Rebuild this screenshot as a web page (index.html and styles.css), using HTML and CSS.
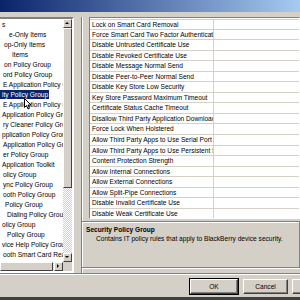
FILE: index.html
```html
<!DOCTYPE html>
<html lang="en">
<head>
  <meta charset="utf-8">
  <title>IT Policy</title>
  <link rel="stylesheet" href="styles.css">
</head>
<body>
<div class="window">
  <div class="titlebar"></div>
  <div class="main">
    <div class="tree">
      <div class="tree-list">
        <div class="node i0">s</div>
        <div class="node i7">e-Only Items</div>
        <div class="node i2">op-Only Items</div>
        <div class="node i10">Items</div>
        <div class="node i2">on Policy Group</div>
        <div class="node i1">ord Policy Group</div>
        <div class="node i1">E Application Policy Group</div>
        <div class="node i0"><span class="selected">ity Policy Group</span></div>
        <div class="node i1">E Application Policy Group</div>
        <div class="node i0">Application Policy Group</div>
        <div class="node i1">ry Cleaner Policy Group</div>
        <div class="node i0">pplication Policy Group</div>
        <div class="node i1">Application Policy Group</div>
        <div class="node i1">er Policy Group</div>
        <div class="node i0">Application Toolkit</div>
        <div class="node i1">olicy Group</div>
        <div class="node i1">ync Policy Group</div>
        <div class="node i1">ooth Policy Group</div>
        <div class="node i3">Policy Group</div>
        <div class="node i5">Dialing Policy Group</div>
        <div class="node i0">olicy Group</div>
        <div class="node i5">Policy Group</div>
        <div class="node i0">vice Help Policy Group</div>
        <div class="node i1">ooth Smart Card Reader Policy Group</div>
        <div class="node i1">olicy Group</div>
      </div>
      <div class="vscroll">
        <div class="btn arrow-up"></div>
        <div class="thumb"></div>
        <div class="track"></div>
        <div class="btn arrow-down"></div>
      </div>
      <div class="hscroll">
        <div class="hthumb"></div>
        <div class="btn arrow-right"></div>
      </div>
      <div class="corner"></div>
    </div>

    <div class="detail">
      <div class="rules">
        <div class="rule"><span class="name">Lock on Smart Card Removal</span><span class="value"></span></div>
        <div class="rule"><span class="name">Force Smart Card Two Factor Authentication</span><span class="value"></span></div>
        <div class="rule"><span class="name">Disable Untrusted Certificate Use</span><span class="value"></span></div>
        <div class="rule"><span class="name">Disable Revoked Certificate Use</span><span class="value"></span></div>
        <div class="rule"><span class="name">Disable Message Normal Send</span><span class="value"></span></div>
        <div class="rule"><span class="name">Disable Peer-to-Peer Normal Send</span><span class="value"></span></div>
        <div class="rule"><span class="name">Disable Key Store Low Security</span><span class="value"></span></div>
        <div class="rule"><span class="name">Key Store Password Maximum Timeout</span><span class="value"></span></div>
        <div class="rule"><span class="name">Certificate Status Cache Timeout</span><span class="value"></span></div>
        <div class="rule"><span class="name">Disallow Third Party Application Downloads</span><span class="value"></span></div>
        <div class="rule"><span class="name">Force Lock When Holstered</span><span class="value"></span></div>
        <div class="rule"><span class="name">Allow Third Party Apps to Use Serial Port</span><span class="value"></span></div>
        <div class="rule"><span class="name">Allow Third Party Apps to Use Persistent Store</span><span class="value"></span></div>
        <div class="rule"><span class="name">Content Protection Strength</span><span class="value"></span></div>
        <div class="rule"><span class="name">Allow Internal Connections</span><span class="value"></span></div>
        <div class="rule"><span class="name">Allow External Connections</span><span class="value"></span></div>
        <div class="rule"><span class="name">Allow Split-Pipe Connections</span><span class="value"></span></div>
        <div class="rule"><span class="name">Disable Invalid Certificate Use</span><span class="value"></span></div>
        <div class="rule"><span class="name">Disable Weak Certificate Use</span><span class="value"></span></div>
      </div>
      <div class="description">
        <div class="desc-title">Security Policy Group</div>
        <div class="desc-text">Contains IT policy rules that apply to BlackBerry device security.</div>
      </div>
    </div>
  </div>
  <div class="footer">
    <button class="button default" type="button">OK</button>
    <button class="button" type="button">Cancel</button>
    <button class="button" type="button">Apply</button>
  </div>
</div>
<svg class="cursor" width="8" height="12" viewBox="0 0 8 12"><path d="M0.5 0.5 L0.5 9.5 L2.5 7.5 L4 11 L5.5 10.3 L4 7 L7 7 Z" fill="#fff" stroke="#000" stroke-width="1"/></svg>
</body>
</html>
```

FILE: styles.css
```css
body {
  margin: 0;
  width: 300px;
  height: 300px;
  overflow: hidden;
  background: #d4d0c8;
  font-family: "Liberation Sans", Arial, sans-serif;
  font-size: 6.6px;
  color: #000;
  position: relative;
}

.window {
  display: flex;
  flex-direction: column;
  height: 297px;
  border-bottom: 3px solid #404040;
}

.titlebar {
  height: 12px;
  background: linear-gradient(to right, #0a246a, #a6caf0);
}

.main {
  display: flex;
  padding-top: 5px;
  height: 256px;
}

/* tree on the left */
.tree {
  box-sizing: border-box;
  width: 76px;
  margin-left: -2px;
  display: grid;
  grid-template-columns: 1fr 9px;
  grid-template-rows: 1fr 9px;
  border: 2px solid;
  border-color: #808080 #ffffff #ffffff #808080;
  box-shadow: inset 1px 1px 0 #404040;
  background: #fff;
  overflow: hidden;
}

.tree-list {
  background: #fff;
  overflow: hidden;
  padding-top: 1px;
}

.node {
  height: 10px;
  line-height: 10px;
  white-space: nowrap;
}

.i0 { padding-left: 2px; }
.i1 { padding-left: 3px; }
.i2 { padding-left: 4px; }
.i3 { padding-left: 5px; }
.i5 { padding-left: 7px; }
.i7 { padding-left: 9px; }
.i10 { padding-left: 12px; }

.selected {
  background: #0a246a;
  color: #fff;
  margin-left: -2px;
  padding: 1px 1px 1px 2px;
}

.vscroll {
  display: flex;
  flex-direction: column;
  background: #d4d0c8;
}

.btn {
  width: 9px;
  height: 9px;
  box-sizing: border-box;
  background: #d4d0c8;
  border: 1px solid;
  border-color: #ffffff #404040 #404040 #ffffff;
  position: relative;
  flex: none;
}

.btn::after {
  content: "";
  position: absolute;
  left: 1px;
  top: 2px;
  border: 2.5px solid transparent;
}

.arrow-up::after {
  border-bottom-color: #000;
  top: 0;
}

.arrow-down::after {
  border-top-color: #000;
  top: 2px;
}

.arrow-right::after {
  border-left-color: #000;
  left: 2px;
  top: 1px;
}

.thumb {
  height: 160px;
  box-sizing: border-box;
  border: 1px solid;
  border-color: #ffffff #404040 #404040 #ffffff;
  flex: none;
}

.track {
  flex: 1;
  background: repeating-conic-gradient(#ffffff 0 25%, #d4d0c8 0 50%) 0 0 / 2px 2px;
}

.hscroll {
  display: flex;
  background: repeating-conic-gradient(#ffffff 0 25%, #d4d0c8 0 50%) 0 0 / 2px 2px;
}

.hthumb {
  flex: 1;
  box-sizing: border-box;
  background: #d4d0c8;
  border: 1px solid;
  border-color: #ffffff #404040 #404040 #ffffff;
  margin-right: 1px;
}

.corner {
  background: #d4d0c8;
}

/* right side */
.detail {
  flex: 1;
  margin-left: 7px;
  display: flex;
  flex-direction: column;
  border-left: 1px solid #808080;
  box-shadow: inset 1px 0 0 #ffffff;
  padding-left: 7px;
  padding-bottom: 5px;
}

.rules {
  height: 199px;
  background: #fff;
  border: 1px solid;
  border-color: #808080 transparent #ffffff #808080;
  overflow: hidden;
  padding-top: 1px;
}

.rule {
  display: grid;
  grid-template-columns: 124px 1fr;
  height: 10.55px;
  line-height: 10px;
  border-bottom: 1px solid #d4d0c8;
  box-sizing: border-box;
  white-space: nowrap;
}

.rule:first-child {
  border-top: 1px solid #d4d0c8;
}

.name {
  padding-left: 2px;
  overflow: hidden;
  border-right: 1px solid #d4d0c8;
}

.description {
  margin-top: 2px;
  margin-left: -8px;
  flex: 1;
  border: 1px solid #808080;
  box-shadow: inset 1px 1px 0 #ffffff, 1px 1px 0 #ffffff;
  padding: 3px 0 0 4px;
}

.desc-title {
  font-weight: bold;
  line-height: 9px;
}

.desc-text {
  padding-left: 10px;
  line-height: 9px;
}

/* buttons */
.footer {
  flex: 1;
  display: flex;
  align-items: flex-start;
  padding: 5px 0 0 190px;
  border-top: 1px solid #808080;
  box-shadow: inset 0 1px 0 #ffffff;
}

.button {
  flex: none;
  width: 45px;
  height: 15px;
  padding: 0;
  margin: 0 4px 0 0;
  font: inherit;
  color: #000;
  background: #d4d0c8;
  border: 1px solid;
  border-color: #ffffff #404040 #404040 #ffffff;
  box-shadow: inset -1px -1px 0 #808080;
}

.button.default {
  width: 48px;
  margin-right: 5px;
  outline: 1px solid #000;
  outline-offset: 0;
}

.cursor {
  position: absolute;
  left: 24px;
  top: 98px;
}
```
